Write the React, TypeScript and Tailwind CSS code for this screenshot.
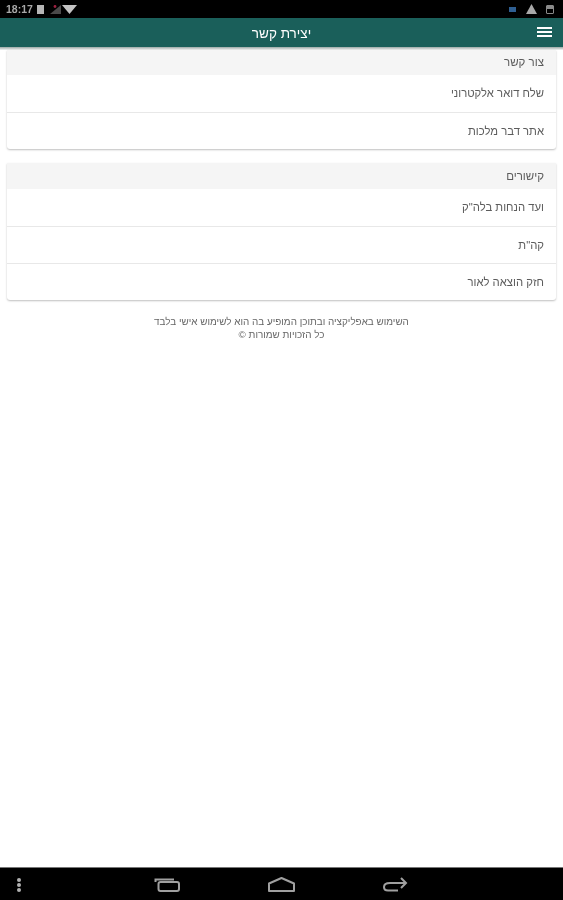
import React from 'react';

const contactRows = ['שלח דואר אלקטרוני', 'אתר דבר מלכות'];
const linkRows = ['ועד הנחות בלה"ק', 'קה"ת', 'חזק הוצאה לאור'];

const Section = ({ title, rows, headerH }: { title: string; rows: string[]; headerH: string }) => (
  <section className="mx-[7px] rounded-b-[3px] bg-white shadow-[0_1px_2px_rgba(0,0,0,0.25)]">
    <div className={`${headerH} flex items-center bg-[#f5f5f5] pr-[12px] pt-[1px] text-[11.5px] text-[#5c5c5c]`}>{title}</div>
    {rows.map((row, i) => (
      <div
        key={row}
        className={`flex h-[37px] items-center pr-[12px] text-[11.3px] text-[#5c5c5c] ${i > 0 ? 'border-t border-[#e8e8e8]' : ''}`}
      >
        {row}
      </div>
    ))}
  </section>
);

export default function App() {
  return (
    <div dir="rtl" className="flex h-[900px] w-[563px] flex-col overflow-hidden bg-white font-['Liberation_Sans',sans-serif] blur-[0.45px]">
      {/* Status bar */}
      <div dir="ltr" className="relative h-[18px] shrink-0 bg-black text-[#a8a8a8]">
        <span className="absolute left-[6px] top-[2px] text-[10.5px] font-bold leading-[14px]">18:17</span>
        <span className="absolute left-[37px] top-[5px] h-[9px] w-[7px] bg-[#b5b5b5]" />
        <svg className="absolute left-[49px] top-[4px]" width="28" height="11" viewBox="0 0 28 11">
          <path d="M1 10 L12 1 V10 Z" fill="#4a4a4a" />
          <circle cx="6" cy="2.5" r="1.4" fill="#a02040" />
          <path d="M13 1 H28 L20.5 10 Z" fill="#c4c4c4" />
        </svg>
        <span className="absolute left-[509px] top-[7px] h-[5px] w-[7px] bg-[#2f5f92]" />
        <svg className="absolute left-[526px] top-[4px]" width="11" height="10" viewBox="0 0 11 10">
          <path d="M5.5 0 L11 10 H0 Z" fill="#a8a8a8" />
        </svg>
        <span className="absolute left-[546px] top-[5px] flex h-[9px] w-[8px] flex-col rounded-[1px] border border-[#8a8a8a]">
          <span className="h-[3px] bg-[#8a8a8a]" />
        </span>
      </div>

      {/* Header */}
      <header className="relative flex h-[29px] shrink-0 items-center justify-center bg-[#1a5f5a] pt-[3px] text-[13.5px] text-white">
        יצירת קשר
        <div className="absolute right-[11px] top-[9px] flex w-[15px] flex-col gap-[2px]">
          <span className="h-[2px] bg-white" />
          <span className="h-[2px] bg-white" />
          <span className="h-[2px] bg-white" />
        </div>
      </header>
      <div className="h-[3px] shrink-0 bg-gradient-to-b from-[#9aa8a6] to-[#f4f4f4]" />

      {/* Content */}
      <main className="flex flex-1 flex-col">
        <Section title="צור קשר" rows={contactRows} headerH="h-[25px]" />
        <div className="h-[14px]" />
        <Section title="קישורים" rows={linkRows} headerH="h-[26px]" />
        <footer className="mt-[15px] text-center text-[9.9px] leading-[13px] text-[#666]">
          <p>השימוש באפליקציה ובתוכן המופיע בה הוא לשימוש אישי בלבד</p>
          <p>כל הזכויות שמורות ©</p>
        </footer>
      </main>

      {/* Navigation bar */}
      <nav dir="ltr" className="relative h-[33px] shrink-0 border-t border-[#777] bg-black">
        <div className="absolute left-[17px] top-[10px] flex flex-col gap-[1px]">
          <span className="h-[4px] w-[4px] rounded-full bg-[#b0b0b0]" />
          <span className="h-[4px] w-[4px] rounded-full bg-[#b0b0b0]" />
          <span className="h-[4px] w-[4px] rounded-full bg-[#b0b0b0]" />
        </div>
        <svg className="absolute left-[154px] top-[10px]" width="27" height="14" viewBox="0 0 27 14" fill="none" stroke="#a0a0a0" strokeWidth="2">
          <path d="M1.5 4 V1.5 H20" />
          <rect x="4.5" y="4" width="20.5" height="9" rx="2" />
        </svg>
        <svg className="absolute left-[268px] top-[9px]" width="27" height="15" viewBox="0 0 27 15" fill="none" stroke="#a0a0a0" strokeWidth="2" strokeLinejoin="round">
          <path d="M1 6.5 L13.5 1 L26 6.5 V14 H1 Z" />
        </svg>
        <svg className="absolute left-[383px] top-[9px]" width="25" height="15" viewBox="0 0 25 15" fill="none" stroke="#a0a0a0" strokeWidth="2">
          <path d="M23 6 H7 Q1 6 1 10 Q1 13.5 5 13.5 H15" />
          <path d="M18 1 L23 6 L18 11" />
        </svg>
      </nav>
    </div>
  );
}
